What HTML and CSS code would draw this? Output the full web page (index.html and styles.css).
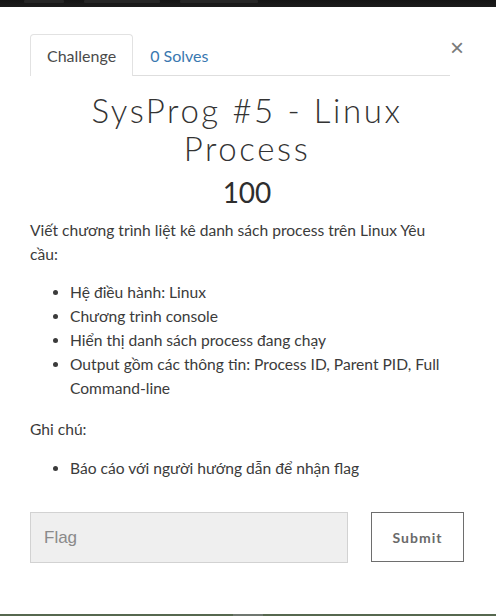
FILE: index.html
```html
<!DOCTYPE html>
<html lang="vi">
<head>
<meta charset="utf-8">
<title>SysProg #5 - Linux Process</title>
<link rel="stylesheet" href="styles.css">
</head>
<body>
<div class="topbar"><i class="ghost w1"></i><i class="ghost w2"></i><i class="ghost w3"></i></div>
<div class="modal">
  <div class="modal-head">
    <ul class="tabs">
      <li class="tab active">Challenge</li>
      <li class="tab">0 Solves</li>
    </ul>
    <button class="close" type="button" aria-label="Close">&times;</button>
  </div>
  <h2 class="title">SysProg #5 - Linux Process</h2>
  <h3 class="value">100</h3>
  <div class="desc">
    <p>Viết chương trình liệt kê danh sách process trên Linux Yêu cầu:</p>
    <ul>
      <li>Hệ điều hành: Linux</li>
      <li>Chương trình console</li>
      <li>Hiển thị danh sách process đang chạy</li>
      <li>Output gồm các thông tin: Process ID, Parent PID, Full Command-line</li>
    </ul>
    <p class="note">Ghi chú:</p>
    <ul class="note-list">
      <li>Báo cáo với người hướng dẫn để nhận flag</li>
    </ul>
  </div>
  <form class="submit-row">
    <input class="flag" type="text" placeholder="Flag">
    <button class="submit" type="button">Submit</button>
  </form>
</div>
<div class="bottombar"><span class="handle"></span></div>
</body>
</html>
```
FILE: styles.css
```css
html, body {
  margin: 0;
  padding: 0;
}
body {
  width: 496px;
  height: 616px;
  display: flex;
  flex-direction: column;
  background: #fff;
  font-family: Lato, "Noto Sans", sans-serif;
  color: #3b3b3b;
  overflow: hidden;
}
.topbar {
  height: 7px;
  flex: none;
  background: linear-gradient(#151515, #1c1c1c);
  display: flex;
  align-items: flex-start;
  gap: 20px;
  padding-left: 24px;
}
.ghost {
  height: 3px;
  background: #262626;
  border-radius: 1px;
}
.w1 { width: 40px; }
.w2 { width: 76px; }
.w3 { width: 78px; }
.modal {
  flex: 1;
  padding: 27px 32px 0 30px;
  display: flex;
  flex-direction: column;
}
.modal-head {
  display: flex;
  align-items: flex-start;
}
.tabs {
  list-style: none;
  margin: 0;
  padding: 0;
  display: flex;
  width: 420px;
  border-bottom: 1px solid #dedede;
}
.tab {
  padding: 0 16px;
  height: 40px;
  line-height: 41px;
  font-size: 16px;
  color: #3978b0;
  border: 1px solid transparent;
  border-bottom: 0;
  margin-bottom: -1px;
  border-radius: 4px 4px 0 0;
}
.tab.active {
  color: #4a4a4a;
  border-color: #e2e2e2;
  background: #fff;
  height: 41px;
}
.close {
  margin: 3px 0 0 0;
  padding: 0;
  width: 14px;
  border: 0;
  background: none;
  font-family: "Liberation Sans", Arial, sans-serif;
  font-size: 24px;
  line-height: 22px;
  color: #7a7a7a;
}
.title {
  margin: 15px 0 0;
  padding: 0 20px;
  text-align: center;
  font-weight: 300;
  font-size: 33px;
  line-height: 38px;
  letter-spacing: 2.6px;
  color: #333;
}
.value {
  margin: 5px 0 0;
  text-align: center;
  font-weight: 400;
  font-size: 28px;
  line-height: 40px;
  color: #2e2e2e;
}
.desc {
  width: 420px;
  font-size: 15.6px;
  line-height: 24px;
}
.desc p {
  margin: 6px 0 0;
}
.desc ul {
  margin: 14px 0 0;
  padding-left: 40px;
}
.desc .note {
  margin-top: 17px;
}
.desc .note-list {
  margin-top: 15px;
}
.submit-row {
  display: flex;
  align-items: flex-start;
  gap: 23px;
  margin-top: 32px;
}
.flag {
  width: 318px;
  height: 51px;
  box-sizing: border-box;
  margin: 0;
  padding: 0 13px;
  background: #efefef;
  border: 1px solid #d2d2d2;
  font-family: "Liberation Sans", Arial, sans-serif;
  font-size: 17px;
  color: #555;
}
.flag::placeholder {
  color: #8a8a8a;
}
.submit {
  width: 93px;
  height: 50px;
  box-sizing: border-box;
  margin: 0;
  background: #fff;
  border: 1px solid #6e6e6e;
  font-family: Lato, sans-serif;
  font-weight: 700;
  font-size: 14px;
  letter-spacing: 1px;
  color: #6a6a6a;
}
.bottombar {
  height: 2px;
  flex: none;
  background: #56684f;
  display: flex;
  justify-content: center;
}
.handle {
  width: 30px;
  background: #6f7770;
}
```
